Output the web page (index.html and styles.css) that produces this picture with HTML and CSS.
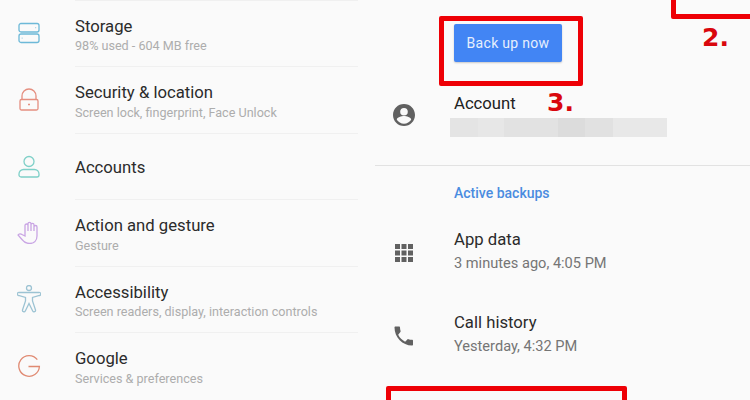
FILE: index.html
```html
<!DOCTYPE html>
<html lang="en">
<head>
  <meta charset="UTF-8">
  <title>Settings and backup</title>
  <link rel="stylesheet" href="styles.css">
</head>
<body>

<div class="screen">
  <div class="settings">
    <div class="setting">
      <svg class="setting-icon" viewBox="0 0 24 24" stroke="#6db9d8">
        <rect x="2" y="2.5" width="20" height="8.5" rx="2"/>
        <rect x="2" y="13" width="20" height="8.5" rx="2"/>
        <path d="M18.500 6.700h.6M4.800 17.200h.6"/>
      </svg>
      <div class="setting-text">
        <div class="title">Storage</div>
        <div class="sub">98% used - 604 MB free</div>
      </div>
    </div>
    <div class="setting">
      <svg class="setting-icon" viewBox="0 0 24 24" stroke="#e58f80">
        <rect x="3" y="12.500" width="18" height="10.500" rx="1.500"/>
        <path d="M5 12.500V9a7 7 0 0 1 14 0v3.500"/>
        <path d="M12 16.800v1.400" stroke-width="2"/>
      </svg>
      <div class="setting-text">
        <div class="title">Security &amp; location</div>
        <div class="sub">Screen lock, fingerprint, Face Unlock</div>
      </div>
    </div>
    <div class="setting">
      <svg class="setting-icon" viewBox="0 0 24 24" stroke="#7fd0c8">
        <circle cx="12" cy="7.500" r="5"/>
        <path d="M6.500 15.500h11a4.500 4.500 0 0 1 4.500 4.500v1a2 2 0 0 1-2 2H4a2 2 0 0 1-2-2v-1a4.500 4.500 0 0 1 4.500-4.500z"/>
      </svg>
      <div class="setting-text">
        <div class="title">Accounts</div>
      </div>
    </div>
    <div class="setting">
      <svg class="setting-icon" viewBox="0 0 24 24" stroke="#c9a5e4">
        <path d="M8 12V5.500a1.500 1.500 0 0 1 3 0V11M11 11V3.800a1.500 1.500 0 0 1 3 0V11M14 11V4.800a1.500 1.500 0 0 1 3 0V11M17 11V7a1.500 1.500 0 0 1 3 0v9c0 4.500-3 7.500-7.500 7.500-3.500 0-5.500-1.500-7.500-4l-4-4.500c1-1.500 2.800-1.500 4-.5L8 16V12"/>
      </svg>
      <div class="setting-text">
        <div class="title">Action and gesture</div>
        <div class="sub">Gesture</div>
      </div>
    </div>
    <div class="setting">
      <svg class="setting-icon tall" viewBox="0 0 24 28" stroke="#9cc3d3">
        <circle cx="12" cy="3" r="2.500"/>
        <path d="M2 7.500h20a1.500 1.500 0 0 1 .5 3l-7 2v3.500l3 9a1.500 1.500 0 0 1-2.800 1L12 18.500 8.300 26a1.500 1.500 0 0 1-2.800-1l3-9v-3.500l-7-2a1.500 1.500 0 0 1 .5-3z"/>
      </svg>
      <div class="setting-text">
        <div class="title">Accessibility</div>
        <div class="sub">Screen readers, display, interaction controls</div>
      </div>
    </div>
    <div class="setting">
      <svg class="setting-icon" viewBox="0 0 24 24" stroke="#e08a72">
        <path d="M20.300 6.700A10.300 10.300 0 1 0 22.400 13.500H11.500"/>
      </svg>
      <div class="setting-text">
        <div class="title">Google</div>
        <div class="sub">Services &amp; preferences</div>
      </div>
    </div>
  </div>

  <div class="backup">
    <button class="backup-btn">Back up now</button>
    <div class="account">
      <svg class="grey-icon" viewBox="0 0 24 24">
        <path d="M12 1C5.900 1 1 5.900 1 12s4.900 11 11 11 11-4.900 11-11S18.100 1 12 1zm0 4a3.800 3.800 0 1 1 0 7.600A3.800 3.800 0 0 1 12 5zm0 15.700c-3 0-5.700-1.500-7.200-3.900 0-2.400 4.800-3.700 7.200-3.700s7.200 1.300 7.200 3.700c-1.500 2.400-4.200 3.900-7.200 3.900z"/>
      </svg>
      <div class="account-text">
        <div class="title">Account</div>
        <div class="blurred"></div>
      </div>
    </div>
    <div class="section-label">Active backups</div>
    <div class="backup-row">
      <svg class="grey-icon" viewBox="0 0 24 24">
        <path d="M3 3h5v5H3zM9.500 3h5v5h-5zM16 3h5v5h-5zM3 9.500h5v5H3zM9.500 9.500h5v5h-5zM16 9.500h5v5h-5zM3 16h5v5H3zM9.500 16h5v5h-5zM16 16h5v5h-5z"/>
      </svg>
      <div class="backup-text">
        <div class="title">App data</div>
        <div class="time">3 minutes ago, 4:05 PM</div>
      </div>
    </div>
    <div class="backup-row">
      <svg class="grey-icon" viewBox="0 0 24 24">
        <path d="M6.200 10.800c1.500 3 3.900 5.400 6.900 6.900l2.300-2.300c.3-.3.700-.4 1-.2 1.100.4 2.400.6 3.600.6.600 0 1 .4 1 1v3.700c0 .6-.4 1-1 1C10.600 21.500 2.500 13.400 2.500 3.500c0-.6.400-1 1-1H7c.6 0 1 .4 1 1 0 1.300.2 2.500.6 3.600.1.300 0 .7-.2 1z"/>
      </svg>
      <div class="backup-text">
        <div class="title">Call history</div>
        <div class="time">Yesterday, 4:32 PM</div>
      </div>
    </div>
    <div class="backup-row">
      <div class="backup-text no-icon">
        <div class="title">Settings</div>
      </div>
    </div>
  </div>

  <!-- red marks drawn over the screenshot -->
  <div class="mark mark-menu"></div>
  <div class="mark mark-btn"></div>
  <div class="mark mark-sms"></div>
  <div class="mark-num num-2">2.</div>
  <div class="mark-num num-3">3.</div>
</div>

</body>
</html>
```

FILE: styles.css
```css
html, body {
  margin: 0;
  padding: 0;
}

body {
  font-family: Roboto, "Liberation Sans", sans-serif;
  background: #fafafa;
}

.screen {
  position: relative;
  display: flex;
  width: 750px;
  height: 400px;
  overflow: hidden;
  background: #fafafa;
}

/* left phone: settings list */
.settings {
  width: 375px;
  flex-shrink: 0;
  margin-top: -0.5px;
}

.setting {
  display: flex;
  align-items: center;
  height: 66.5px;
  padding-left: 17px;
}

.setting-icon {
  width: 24px;
  height: 24px;
  flex-shrink: 0;
  fill: none;
  stroke-width: 1.3;
  margin-right: 34px;
}

.setting-icon.tall {
  height: 28px;
}

.setting-text {
  box-sizing: border-box;
  display: flex;
  flex-direction: column;
  justify-content: center;
  width: 283px;
  height: 66.5px;
  padding-top: 3.5px;
  border-top: 1px solid #f0f0f0;
}

.title {
  font-size: 16.7px;
  line-height: 22px;
  color: #2b2b2b;
}

.sub {
  font-size: 12.6px;
  line-height: 17px;
  margin-top: -0.5px;
  color: #adadad;
}

/* right phone: backup screen */
.backup {
  flex: 1;
  display: flex;
  flex-direction: column;
  align-items: flex-start;
}

.backup > * {
  flex-shrink: 0;
}

.backup-btn {
  width: 108px;
  height: 38px;
  margin: 24px 0 0 79px;
  padding: 0;
  border: none;
  border-radius: 2px;
  background: #4285f4;
  color: #e6effd;
  font-family: inherit;
  font-size: 14px;
  letter-spacing: 0.3px;
  box-shadow: 0 1px 2px rgba(0, 0, 0, 0.2);
}

.account {
  display: flex;
  align-items: center;
  width: 100%;
  height: 104px;
  box-sizing: border-box;
  padding: 2px 0 0 17px;
  border-bottom: 1px solid #e2e2e2;
}

.grey-icon {
  width: 24px;
  height: 24px;
  flex-shrink: 0;
  fill: #616161;
}

.account-text {
  margin-left: 34px;
}

.account-text .title {
  margin-left: 4px;
  color: #212121;
}

.blurred {
  width: 217px;
  height: 19px;
  margin-top: 3px;
  background: linear-gradient(90deg, #e4e4e4 0 13%, #e7e7e7 13% 25%, #e2e2e2 25% 50%, #dcdcdc 50% 62%, #e1e1e1 62% 75%, #e8e8e8 75% 100%);
}

.section-label {
  margin: 18px 0 9px 79px;
  font-size: 14px;
  line-height: 18px;
  font-weight: 500;
  color: #4a8ce0;
}

.backup-row {
  display: flex;
  align-items: center;
  height: 83px;
  padding-left: 17px;
}

.backup-text {
  margin: -4px 0 0 38px;
}

.backup-text.no-icon {
  margin: -22px 0 0 62px;
}

.time {
  font-size: 14.6px;
  line-height: 18px;
  margin-top: 3px;
  color: #757575;
}

/* annotations */
.mark {
  position: absolute;
  box-sizing: border-box;
  border: 5px solid #ee0006;
  border-radius: 2px;
}

.mark-menu {
  left: 671px;
  top: -20px;
  width: 90px;
  height: 39px;
}

.mark-btn {
  left: 439px;
  top: 16px;
  width: 144px;
  height: 70px;
}

.mark-sms {
  left: 386px;
  top: 386px;
  width: 241px;
  height: 60px;
}

.mark-num {
  position: absolute;
  font-family: "DejaVu Sans", sans-serif;
  font-weight: bold;
  font-size: 25px;
  line-height: 30px;
  color: #d9070d;
}

.num-2 {
  left: 702px;
  top: 23px;
}

.num-3 {
  left: 547px;
  top: 88px;
}
```
